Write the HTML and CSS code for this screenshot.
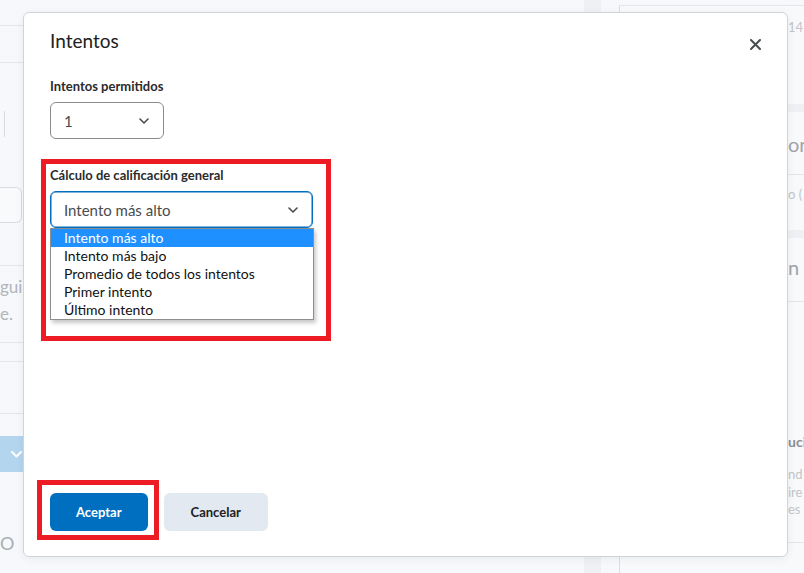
FILE: index.html
```html
<!DOCTYPE html>
<html lang="es">
<head>
<meta charset="utf-8">
<title>Intentos</title>
<link rel="stylesheet" href="styles.css">
</head>
<body>
<div class="page">
  <main class="main">
    <div class="row r1"></div>
    <div class="row r2"></div>
    <div class="r3"><span class="vdiv"></span></div>
    <div class="field"></div>
    <div class="row r4"></div>
    <p class="faded-text">guiente paso del curso<br>e.</p>
    <div class="row r5"></div>
    <div class="row r6"></div>
    <div class="band">
      <svg class="band-chev" width="11" height="7" viewBox="0 0 11 7"><path d="M1 1 L5.5 5.5 L10 1" fill="none" stroke="#fff" stroke-width="2" stroke-linecap="round" stroke-linejoin="round"/></svg>
    </div>
    <p class="big-o">O</p>
  </main>
  <div class="gutter"></div>
  <aside class="side">
    <div class="s-row s1"><span class="s-small">14</span></div>
    <div class="s-band"></div>
    <div class="s-row s2"><span class="s-big">on</span></div>
    <div class="s-row s3"><span class="s-small">o (</span></div>
    <div class="s-band"></div>
    <div class="s-row s4"><span class="s-big">n</span></div>
    <div class="s-row s5">
      <span class="s-bold">ucic</span>
      <span class="s-small s-line">nd</span>
      <span class="s-small s-line">ire</span>
      <span class="s-small s-line">es s</span>
    </div>
  </aside>
</div>

<div class="dialog" role="dialog" aria-label="Intentos">
  <div class="dlg-head">
    <h2 class="dlg-title">Intentos</h2>
    <button class="dlg-close" aria-label="Cerrar">
      <svg width="11" height="11" viewBox="0 0 11 11"><path d="M1 1 L10 10 M10 1 L1 10" fill="none" stroke="#494c4e" stroke-width="2" stroke-linecap="round"/></svg>
    </button>
  </div>

  <label class="field-label lbl-1">Intentos permitidos</label>
  <div class="select sel-small">
    <span class="sel-value">1</span>
    <svg class="chev" width="10" height="6" viewBox="0 0 10 6"><path d="M1 1 L5 5 L9 1" fill="none" stroke="#494c4e" stroke-width="1.6" stroke-linecap="round" stroke-linejoin="round"/></svg>
  </div>

  <label class="field-label lbl-2">Cálculo de calificación general</label>
  <div class="select-wrap">
    <div class="select sel-wide sel-focus">
      <span class="sel-value">Intento más alto</span>
      <svg class="chev" width="10" height="6" viewBox="0 0 10 6"><path d="M1 1 L5 5 L9 1" fill="none" stroke="#494c4e" stroke-width="1.6" stroke-linecap="round" stroke-linejoin="round"/></svg>
    </div>
    <ul class="listbox">
      <li class="opt opt-active">Intento más alto</li>
      <li class="opt">Intento más bajo</li>
      <li class="opt">Promedio de todos los intentos</li>
      <li class="opt">Primer intento</li>
      <li class="opt">Último intento</li>
    </ul>
  </div>

  <div class="dlg-foot">
    <button class="btn btn-primary">Aceptar</button>
    <button class="btn btn-secondary">Cancelar</button>
  </div>
</div>

<div class="mark mark-1"></div>
<div class="mark mark-2"></div>
</body>
</html>
```

FILE: styles.css
```css
html, body {
  margin: 0;
  padding: 0;
}
body {
  width: 804px;
  height: 573px;
  overflow: hidden;
  position: relative;
  background: #f7f8fb;
  font-family: "Lato", "Noto Sans", sans-serif;
  color: #202122;
}

/* ---------- background page ---------- */
.page {
  display: flex;
  height: 573px;
}
.main {
  width: 584px;
  flex: none;
  display: flex;
  flex-direction: column;
}
.row {
  border-bottom: 1px solid #e3e5e9;
  flex: none;
}
.r1 { height: 25px; }
.r2 { height: 36px; }
.r3 {
  height: 124px;
  display: flex;
}
.vdiv {
  width: 1px;
  height: 26px;
  margin: 48px 0 0 4px;
  background: #d6d9dd;
}
.field {
  width: 22px;
  height: 36px;
  box-sizing: border-box;
  border: 1px solid #d9dce1;
  border-left: none;
  border-radius: 0 6px 6px 0;
  background: #f9fafc;
}
.r4 { height: 42px; }
.faded-text {
  margin: 7px 0 0;
  font-size: 17px;
  line-height: 27px;
  color: #b1b5ba;
  white-space: nowrap;
  padding-bottom: 15px;
  border-bottom: 1px solid #e3e5e9;
}
.r5 { height: 18px; }
.r6 { height: 51px; }
.band {
  margin-top: 22px;
  height: 36px;
  background: #b4d5ee;
  display: flex;
  align-items: center;
}
.band-chev {
  margin-left: 11px;
}
.big-o {
  margin: 60px 0 0;
  font-size: 18px;
  line-height: 22px;
  color: #a9adb2;
}
.gutter {
  width: 17px;
  flex: none;
  background: #eef0f4;
}
.side {
  flex: 1;
  margin: 5px 0 0 18px;
  border-top: 1px solid #e2e5e9;
  border-left: 1px solid #dadde2;
  background: #f8f9fb;
  display: flex;
  flex-direction: column;
  white-space: nowrap;
  overflow: hidden;
}
.s-row {
  padding-left: 168px;
  flex: none;
  display: flex;
  flex-direction: column;
}
.s-small {
  font-size: 13px;
  line-height: 17.5px;
  color: #c2c5c9;
}
.s-big {
  font-size: 20px;
  line-height: 24px;
  color: #a0a4a9;
}
.s-bold {
  font-size: 14px;
  line-height: 18px;
  font-weight: 700;
  color: #8a8f94;
}
.s1 { height: 85px; padding-top: 13px; }
.s-band { height: 8px; background: #eef0f3; flex: none; }
.s2 { height: 42px; padding-top: 20px; border-bottom: 1px solid #e2e5e9; }
.s3 { height: 44px; padding-top: 11px; }
.s4 { height: 46px; padding-top: 17px; border-bottom: 1px solid #e2e5e9; }
.s5 { height: 109px; padding-top: 131px; border-bottom: 1px solid #e2e5e9; }
.s-line { line-height: 17.5px; }
.s-bold + .s-line { margin-top: 15px; }

/* ---------- dialog ---------- */
.dialog {
  position: absolute;
  left: 23px;
  top: 12px;
  width: 765px;
  height: 545px;
  box-sizing: border-box;
  background: #fff;
  border: 1px solid #cfd4d9;
  border-radius: 6px;
  box-shadow: 0 2px 10px rgba(0, 0, 0, 0.06);
  padding: 0 26px 25px;
  display: flex;
  flex-direction: column;
}
.dlg-head {
  display: flex;
  justify-content: space-between;
  align-items: flex-start;
  padding-top: 16px;
}
.dlg-title {
  margin: 0;
  font-size: 19px;
  line-height: 24px;
  font-weight: 400;
  color: #202122;
}
.dlg-close {
  margin: 10px 0 0;
  padding: 0;
  border: none;
  background: none;
  width: 11px;
  height: 11px;
  display: block;
}
.dlg-close svg { display: block; }

.field-label {
  display: block;
  font-size: 13px;
  line-height: 20px;
  font-weight: 700;
  color: #2a2b2d;
}
.lbl-1 { margin-top: 23px; }
.lbl-2 { margin-top: 26px; }

.select {
  margin-top: 6px;
  height: 37px;
  box-sizing: border-box;
  border: 1px solid #868c8f;
  border-radius: 6px;
  display: flex;
  align-items: center;
  justify-content: space-between;
  padding: 0 14px 0 13px;
  background: #fff;
}
.sel-small { width: 114px; }
.sel-wide { width: 263px; }
.sel-focus {
  border-color: #006fbf;
  box-shadow: inset 0 0 0 0.5px #006fbf;
}
.sel-value {
  font-size: 15px;
  color: #494c4e;
}
.chev { display: block; }

.select-wrap {
  position: relative;
  width: 264px;
}
.listbox {
  position: absolute;
  left: 0;
  top: 100%;
  width: 264px;
  box-sizing: border-box;
  margin: 0;
  padding: 0;
  list-style: none;
  background: #fff;
  border: 1px solid #8e8e8e;
  box-shadow: 2px 3px 4px rgba(0, 0, 0, 0.22);
}
.opt {
  height: 18px;
  line-height: 17px;
  padding-left: 13px;
  font-size: 14px;
  color: #111;
  white-space: nowrap;
}
.opt-active {
  background: #1e90ff;
  color: #fff;
}

.dlg-foot {
  margin-top: auto;
  display: flex;
  gap: 16px;
}
.btn {
  height: 38px;
  padding: 0 26px;
  border: none;
  border-radius: 6px;
  font-family: "Lato", "Noto Sans", sans-serif;
  font-size: 13px;
  font-weight: 700;
}
.btn-primary {
  background: #006fbf;
  color: #fff;
}
.btn-secondary {
  background: #e3e9f1;
  color: #202122;
  padding: 0 27px;
}

/* ---------- annotation marks ---------- */
.mark {
  position: absolute;
  box-sizing: border-box;
  border: 5px solid #ed1c24;
}
.mark-1 {
  left: 41px;
  top: 159px;
  width: 290px;
  height: 182px;
}
.mark-2 {
  left: 37px;
  top: 480px;
  width: 122px;
  height: 60px;
}
```
